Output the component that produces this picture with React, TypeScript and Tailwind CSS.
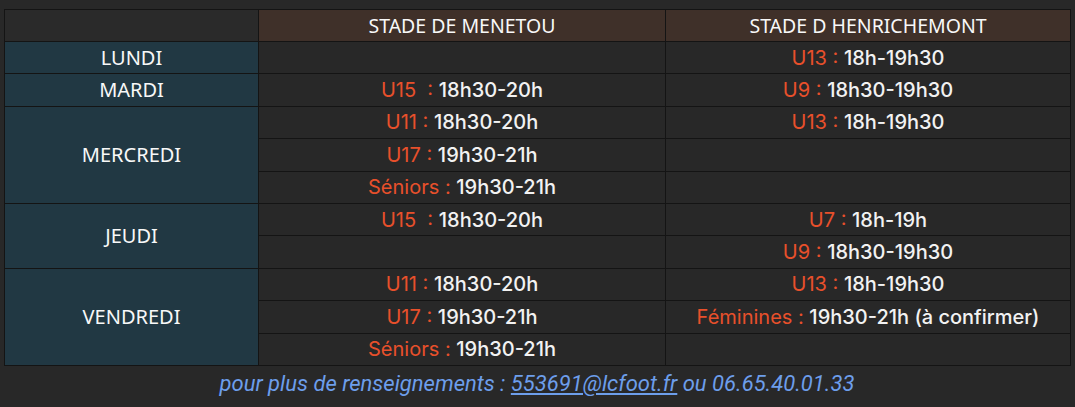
import React from "react";

type Cell = { l: string; t: string } | null;

const rows: { day?: string; span?: number; a: Cell; b: Cell }[] = [
  { day: "LUNDI", span: 1, a: null, b: { l: "U13 :", t: "18h-19h30" } },
  { day: "MARDI", span: 1, a: { l: "U15  :", t: "18h30-20h" }, b: { l: "U9 :", t: "18h30-19h30" } },
  { day: "MERCREDI", span: 3, a: { l: "U11 :", t: "18h30-20h" }, b: { l: "U13 :", t: "18h-19h30" } },
  { a: { l: "U17 :", t: "19h30-21h" }, b: null },
  { a: { l: "Séniors :", t: "19h30-21h" }, b: null },
  { day: "JEUDI", span: 2, a: { l: "U15  :", t: "18h30-20h" }, b: { l: "U7 :", t: "18h-19h" } },
  { a: null, b: { l: "U9 :", t: "18h30-19h30" } },
  { day: "VENDREDI", span: 3, a: { l: "U11 :", t: "18h30-20h" }, b: { l: "U13 :", t: "18h-19h30" } },
  { a: { l: "U17 :", t: "19h30-21h" }, b: { l: "Féminines :", t: "19h30-21h (à confirmer)" } },
  { a: { l: "Séniors :", t: "19h30-21h" }, b: null },
];

const CellContent = ({ c }: { c: Cell }) =>
  c ? (
    <span className="whitespace-pre">
      <span className="text-[#e8502b]">{c.l} </span>
      <span className="text-[#f2f2f2] font-medium">{c.t}</span>
    </span>
  ) : null;

const head = { fontFamily: "'Noto Sans', 'Open Sans', sans-serif" };

export default function App() {
  return (
    <div className="w-[1075px] h-[407px] bg-[#282828] pt-[9px] pl-[4px]" style={{ fontFamily: "Inter, 'Liberation Sans', sans-serif" }}>
      <table className="border-collapse w-[1066px] table-fixed text-[20px] leading-none">
        <colgroup>
          <col className="w-[254px]" />
          <col className="w-[407px]" />
          <col className="w-[405px]" />
        </colgroup>
        <thead>
          <tr className="h-[32px]">
            <th className="border border-[#141414] bg-[#2a2a2a]"></th>
            <th className="border border-[#141414] bg-[#3f3029] text-[#f8f8f8] font-normal text-[19.5px] text-center" style={head}>
              STADE DE MENETOU
            </th>
            <th className="border border-[#141414] bg-[#3f3029] text-[#f8f8f8] font-normal text-[19.5px] text-center" style={head}>
              STADE D HENRICHEMONT
            </th>
          </tr>
        </thead>
        <tbody>
          {rows.map((r, i) => (
            <tr key={i} className="h-[32.4px]">
              {r.day && (
                <td
                  rowSpan={r.span}
                  className="border border-[#141414] bg-[#213843] text-[#f8f8f8] font-normal text-center text-[20px]"
                  style={head}
                >
                  {r.day}
                </td>
              )}
              <td className="border border-[#141414] bg-[#282828] text-center">
                <CellContent c={r.a} />
              </td>
              <td className="border border-[#141414] bg-[#282828] text-center">
                <CellContent c={r.b} />
              </td>
            </tr>
          ))}
        </tbody>
      </table>
      <div className="w-[1066px] text-center mt-[5px] italic text-[22px] leading-[26px] text-[#6d9eeb]" style={{ fontFamily: "Roboto, 'Liberation Sans', sans-serif" }}>
        pour plus de renseignements : <span className="underline">553691@lcfoot.fr</span> ou 06.65.40.01.33
      </div>
    </div>
  );
}
